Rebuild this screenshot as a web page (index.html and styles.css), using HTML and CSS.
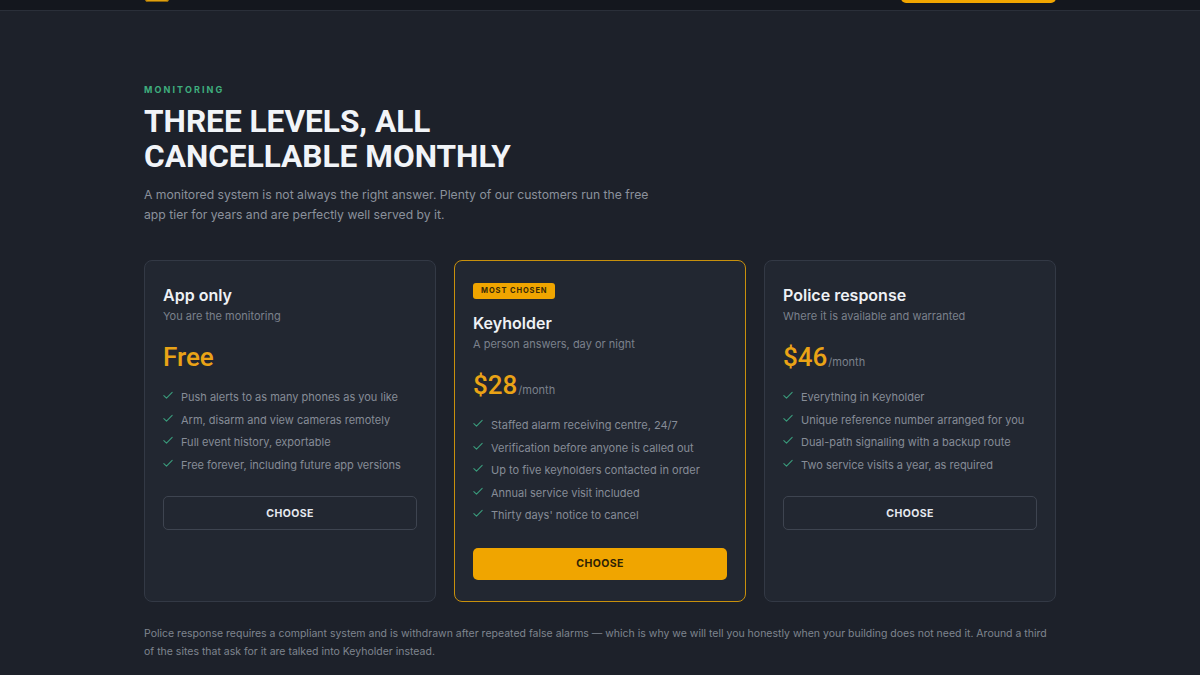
FILE: index.html
```html
<!DOCTYPE html>
<html lang="en">
<head>
<meta charset="utf-8">
<title>Monitoring plans</title>
<link rel="stylesheet" href="styles.css">
</head>
<body>
<header class="topbar">
  <div class="topbar-inner">
    <div class="logo-mark"></div>
    <a class="nav-cta" href="#" aria-label="Get a quote"></a>
  </div>
</header>
<main class="section">
  <div class="container">
    <p class="eyebrow">MONITORING</p>
    <h1 class="heading">THREE LEVELS, ALL<br>CANCELLABLE MONTHLY</h1>
    <p class="lead">A monitored system is not always the right answer. Plenty of our customers run the free app tier for years and are perfectly well served by it.</p>

    <div class="plans">
      <article class="plan">
        <h2 class="plan-name">App only</h2>
        <p class="plan-sub">You are the monitoring</p>
        <div class="price"><span class="amount">Free</span></div>
        <ul class="features">
          <li><svg class="check" viewBox="0 0 12 10"><path d="M1 5.2 L4.2 8.2 L11 1.2"/></svg>Push alerts to as many phones as you like</li>
          <li><svg class="check" viewBox="0 0 12 10"><path d="M1 5.2 L4.2 8.2 L11 1.2"/></svg>Arm, disarm and view cameras remotely</li>
          <li><svg class="check" viewBox="0 0 12 10"><path d="M1 5.2 L4.2 8.2 L11 1.2"/></svg>Full event history, exportable</li>
          <li><svg class="check" viewBox="0 0 12 10"><path d="M1 5.2 L4.2 8.2 L11 1.2"/></svg>Free forever, including future app versions</li>
        </ul>
        <a class="btn btn-outline" href="#">CHOOSE</a>
      </article>

      <article class="plan plan-featured">
        <span class="badge">MOST CHOSEN</span>
        <h2 class="plan-name">Keyholder</h2>
        <p class="plan-sub">A person answers, day or night</p>
        <div class="price"><span class="amount">$28</span><span class="per">/month</span></div>
        <ul class="features">
          <li><svg class="check" viewBox="0 0 12 10"><path d="M1 5.2 L4.2 8.2 L11 1.2"/></svg>Staffed alarm receiving centre, 24/7</li>
          <li><svg class="check" viewBox="0 0 12 10"><path d="M1 5.2 L4.2 8.2 L11 1.2"/></svg>Verification before anyone is called out</li>
          <li><svg class="check" viewBox="0 0 12 10"><path d="M1 5.2 L4.2 8.2 L11 1.2"/></svg>Up to five keyholders contacted in order</li>
          <li><svg class="check" viewBox="0 0 12 10"><path d="M1 5.2 L4.2 8.2 L11 1.2"/></svg>Annual service visit included</li>
          <li><svg class="check" viewBox="0 0 12 10"><path d="M1 5.2 L4.2 8.2 L11 1.2"/></svg>Thirty days' notice to cancel</li>
        </ul>
        <a class="btn btn-solid" href="#">CHOOSE</a>
      </article>

      <article class="plan">
        <h2 class="plan-name">Police response</h2>
        <p class="plan-sub">Where it is available and warranted</p>
        <div class="price"><span class="amount">$46</span><span class="per">/month</span></div>
        <ul class="features">
          <li><svg class="check" viewBox="0 0 12 10"><path d="M1 5.2 L4.2 8.2 L11 1.2"/></svg>Everything in Keyholder</li>
          <li><svg class="check" viewBox="0 0 12 10"><path d="M1 5.2 L4.2 8.2 L11 1.2"/></svg>Unique reference number arranged for you</li>
          <li><svg class="check" viewBox="0 0 12 10"><path d="M1 5.2 L4.2 8.2 L11 1.2"/></svg>Dual-path signalling with a backup route</li>
          <li><svg class="check" viewBox="0 0 12 10"><path d="M1 5.2 L4.2 8.2 L11 1.2"/></svg>Two service visits a year, as required</li>
        </ul>
        <a class="btn btn-outline" href="#">CHOOSE</a>
      </article>
    </div>

    <p class="footnote">Police response requires a compliant system and is withdrawn after repeated false alarms — which is why we will tell you honestly when your building does not need it. Around a third of the sites that ask for it are talked into Keyholder instead.</p>
  </div>
</main>
</body>
</html>
```

FILE: styles.css
```css
* { box-sizing: border-box; }

html, body {
  margin: 0;
  padding: 0;
  background: #1d212a;
  color: #e8ecf2;
  font-family: Inter, "Noto Sans", sans-serif;
  overflow: hidden;
}

.topbar {
  height: 11px;
  background: #14171e;
  border-bottom: 1px solid #2a2f39;
  overflow: hidden;
}

.topbar-inner {
  width: 912px;
  height: 10px;
  margin: 0 auto;
  display: flex;
  justify-content: space-between;
  align-items: flex-end;
}

.logo-mark {
  width: 24px;
  height: 24px;
  margin-left: 1px;
  margin-bottom: 8px;
  border-radius: 3px;
  background: #e0a010;
  box-shadow: inset 0 -1px 0 #8a6208;
}

.nav-cta {
  display: block;
  width: 155px;
  height: 36px;
  margin-bottom: 7px;
  border-radius: 5px;
  background: #f0a500;
}

.section {
  padding-top: 73px;
}

.container {
  width: 912px;
  margin: 0 auto;
}

.eyebrow {
  margin: 0;
  font-size: 9px;
  font-weight: 700;
  letter-spacing: 2.1px;
  color: #3fae7e;
  line-height: 12px;
}

.heading {
  margin: 8px 0 0;
  font-family: Roboto, "Liberation Sans", sans-serif;
  font-weight: 700;
  font-size: 31.6px;
  line-height: 35px;
  letter-spacing: 0;
  color: #f1f4f8;
}

.lead {
  margin: 11px 0 0;
  max-width: 520px;
  font-size: 12.2px;
  line-height: 20px;
  color: #8b919c;
}

.plans {
  margin-top: 35px;
  display: grid;
  grid-template-columns: repeat(3, 1fr);
  gap: 18px;
}

.plan {
  background: #222731;
  border: 1px solid #333945;
  border-radius: 8px;
  padding: 24px 18px 18px;
  height: 342px;
  display: flex;
  flex-direction: column;
  align-items: flex-start;
}

.plan-featured {
  border-color: #c8900c;
  padding-top: 22px;
}

.badge {
  display: inline-block;
  background: #f0a500;
  color: #3a2a05;
  font-size: 7.5px;
  font-weight: 700;
  letter-spacing: 0.9px;
  line-height: 10px;
  padding: 3px 8px;
  border-radius: 3px;
  margin-bottom: 14px;
}

.plan-name {
  margin: 0;
  font-size: 16px;
  font-weight: 600;
  line-height: 20px;
  color: #eef1f5;
}

.plan-sub {
  margin: 4px 0 0;
  font-size: 11px;
  line-height: 14px;
  color: #7b818c;
}

.price {
  margin-top: 18px;
  display: flex;
  align-items: baseline;
  height: 32px;
}

.amount {
  font-family: Roboto, "Liberation Sans", sans-serif;
  font-weight: 500;
  font-size: 26px;
  line-height: 32px;
  color: #eaa316;
}

.per {
  font-size: 11px;
  color: #7b818c;
  margin-left: 1px;
}

.features {
  list-style: none;
  margin: 17px 0 0;
  padding: 0;
  width: 100%;
}

.features li {
  display: flex;
  align-items: center;
  font-size: 11px;
  line-height: 15px;
  color: #868c97;
  margin-bottom: 7.6px;
}

.check {
  width: 10px;
  height: 9px;
  margin-right: 8px;
  margin-top: -4px;
  flex: none;
  fill: none;
  stroke: #3a9c7c;
  stroke-width: 1.3;
  stroke-linecap: round;
  stroke-linejoin: round;
}

.btn {
  margin-top: 16px;
  width: 100%;
  height: 34px;
  border-radius: 5px;
  display: flex;
  align-items: center;
  justify-content: center;
  font-size: 10.5px;
  font-weight: 700;
  letter-spacing: 0.4px;
  text-decoration: none;
}

.btn-outline {
  border: 1px solid #3e4450;
  color: #e6e9ee;
  background: transparent;
}

.btn-solid {
  height: 32px;
  background: #f0a500;
  color: #2e2206;
  margin-top: 17px;
}

.footnote {
  margin: 23px 0 0;
  font-size: 10.5px;
  line-height: 18px;
  color: #7f858f;
}
```
